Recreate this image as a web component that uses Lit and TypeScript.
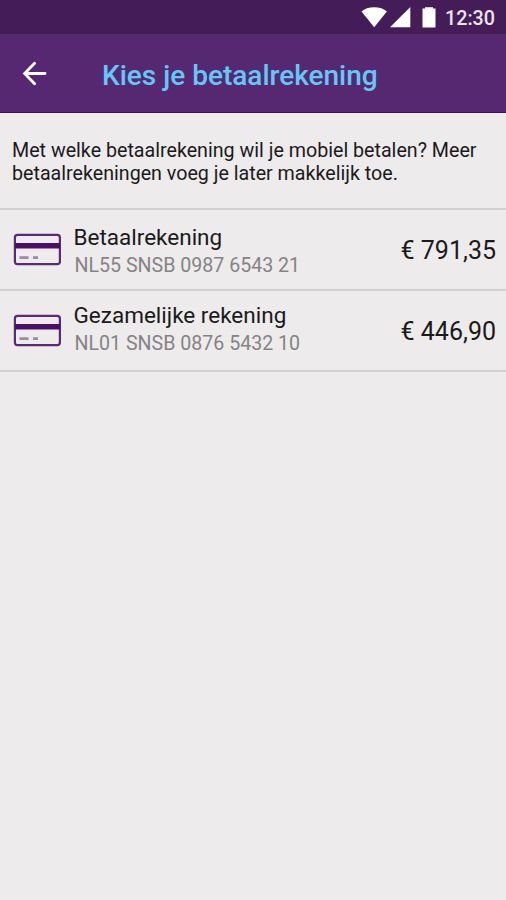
import { LitElement, html, css } from "lit";
import { customElement, property } from "lit/decorators.js";

@customElement("status-bar")
class StatusBar extends LitElement {
  static styles = css`
    :host {
      display: flex;
      justify-content: flex-end;
      height: 34px;
      background: #431c58;
      color: #e9e3ec;
    }
    svg { display: block; flex: none; width: 80px; height: 34px; margin-right: 5px; }
    .time {
      width: 61px;
      font-size: 19.7px;
      line-height: 37px;
      font-weight: 500;
      white-space: nowrap;
    }
  `;
  render() {
    return html`
      <svg viewBox="0 0 80 34" fill="#fff">
        <path d="M1.5 11.5C4.5 8.6 9 7.2 14.2 7.2s9.7 1.4 12.7 4.3L14.2 27.2z" />
        <path d="M50.3 7v20.3H30z" />
        <path d="M62.5 8.6h2.5V7.2h8v1.4h2.5v18.8h-13z" />
      </svg>
      <span class="time">12:30</span>
    `;
  }
}

@customElement("account-row")
class AccountRow extends LitElement {
  @property() name = "";
  @property() iban = "";
  @property() amount = "";

  static styles = css`
    :host {
      display: flex;
      box-sizing: border-box;
      height: 81px;
      padding: 0 10px 0 13px;
      border-bottom: 2px solid #d2d0d2;
    }
    svg { display: block; flex: none; width: 48px; height: 34px; margin-top: 22px; }
    .text { flex: 1; margin-left: 12.5px; padding-top: var(--text-top, 13px); white-space: nowrap; }
    .name { font-size: 22.5px; line-height: 28px; color: #1b1a1b; }
    .iban { font-size: 19.6px; line-height: 28px; color: #858385; margin: 1px 0 0 1px; }
    .amount { font-size: 25px; line-height: 82px; color: #1b1a1b; white-space: nowrap; }
  `;
  render() {
    return html`
      <svg viewBox="0 0 48 34" fill="none">
        <rect x="1.9" y="2.8" width="45" height="29.4" rx="2.6" stroke="#5a2a78" stroke-width="2.2" />
        <path d="M2 13.8h45" stroke="#4b0f66" stroke-width="5.6" />
        <path d="M6.5 25.6h9M20 25.6h5" stroke="#9a8aa2" stroke-width="2.6" />
      </svg>
      <div class="text">
        <div class="name">${this.name}</div>
        <div class="iban">${this.iban}</div>
      </div>
      <div class="amount">${this.amount}</div>
    `;
  }
}

@customElement("app-root")
class AppRoot extends LitElement {
  static styles = css`
    :host {
      display: block;
      height: 900px;
      overflow: hidden;
      background: #edebec;
      font-family: Roboto, "Liberation Sans", sans-serif;
    }
    header {
      display: flex;
      align-items: center;
      box-sizing: border-box;
      height: 79px;
      padding-left: 22px;
      background: #572872;
      border-bottom: 1px solid #40105c;
    }
    .back { display: block; flex: none; width: 26px; height: 26px; }
    h1 {
      margin: 5px 0 0 54px;
      font-size: 28px;
      line-height: 34px;
      font-weight: 500;
      color: #64c8f5;
      white-space: nowrap;
    }
    .intro {
      box-sizing: border-box;
      height: 97px;
      margin: 0;
      padding: 25.5px 12px 0;
      border-bottom: 2px solid #d2d0d2;
      font-size: 19.67px;
      line-height: 23px;
      color: #1b1a1b;
      white-space: nowrap;
    }
    .joint { --text-top: 10px; }
  `;
  render() {
    return html`
      <status-bar></status-bar>
      <header>
        <svg class="back" viewBox="0 0 26 26" fill="none" stroke="#fff" stroke-width="2.8" stroke-linecap="round">
          <path d="M23 13.5H3M12.6 3.2L2.6 13.5l10 10.3" />
        </svg>
        <h1>Kies je betaalrekening</h1>
      </header>
      <p class="intro">
        Met welke betaalrekening wil je mobiel betalen? Meer<br />betaalrekeningen voeg je later makkelijk toe.
      </p>
      <account-row name="Betaalrekening" iban="NL55 SNSB 0987 6543 21" amount="€ 791,35"></account-row>
      <account-row class="joint" name="Gezamelijke rekening" iban="NL01 SNSB 0876 5432 10" amount="€ 446,90"></account-row>
    `;
  }
}
